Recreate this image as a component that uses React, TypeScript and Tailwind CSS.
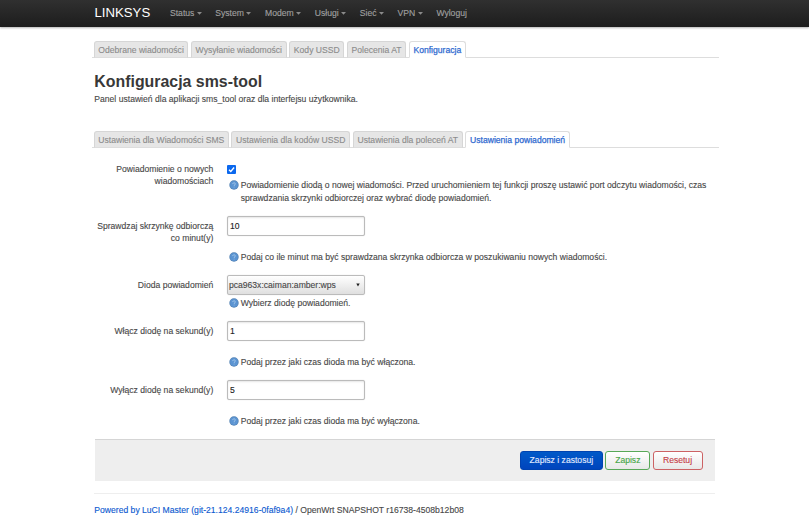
import type { ReactNode } from 'react';

const menu = [
  { label: 'Status', width: 'w-[45.3px]' },
  { label: 'System', width: 'w-[49.7px]' },
  { label: 'Modem', width: 'w-[49.8px]' },
  { label: 'Usługi', width: 'w-[45px]' },
  { label: 'Sieć', width: 'w-[37.8px]' },
  { label: 'VPN', width: 'w-[38.8px]' },
];

const mainTabs = [
  { label: 'Odebrane wiadomości', width: 'w-[94.5px]' },
  { label: 'Wysyłanie wiadomości', width: 'w-[96px]' },
  { label: 'Kody USSD', width: 'w-[55px]' },
  { label: 'Polecenia AT', width: 'w-[59.5px]' },
  { label: 'Konfiguracja', width: 'w-[57px]' },
];

const subTabs = [
  { label: 'Ustawienia dla Wiadomości SMS', width: 'w-[135px]' },
  { label: 'Ustawienia dla kodów USSD', width: 'w-[119px]' },
  { label: 'Ustawienia dla poleceń AT', width: 'w-[110px]' },
  { label: 'Ustawienia powiadomień', width: 'w-[104.5px]' },
];

function Tabs({ items }: { items: { label: string; width: string }[] }) {
  return (
    <ul className="-ml-[2.5px] flex h-[17px] w-[627px] gap-[2.5px] border-b border-[#ddd] pl-[2px]">
      {items.map((t, i) => (
        <li
          key={t.label}
          className={`flex h-[17px] shrink-0 items-center justify-center whitespace-nowrap rounded-t-[3px] border pt-px ${t.width} ${
            i === items.length - 1
              ? 'border-[#ddd] border-b-white bg-white text-[#2f6ad0] [-webkit-text-stroke:0.25px]'
              : 'border-[#d6d6d6] border-b-[#ddd] bg-[#e6e6e6] text-[#8c8c8c]'
          }`}
        >
          {t.label}
        </li>
      ))}
    </ul>
  );
}

function HelpIcon() {
  return (
    <svg viewBox="0 0 10 10" className="mt-[1.2px] h-[10px] w-[10px] shrink-0">
      <circle cx="5" cy="5" r="4.7" fill="#5583b4" />
      <circle cx="5" cy="5" r="3.9" fill="#5b94d2" />
      <path d="M3.7 4.1C3.7 2.4 6.4 2.4 6.3 4C6.2 4.9 5.1 4.9 5.1 5.9M5.1 6.7V7.4" fill="none" stroke="#b3d0ee" strokeWidth=".8" />
    </svg>
  );
}

function Help({ children, className }: { children: ReactNode; className: string }) {
  return (
    <div className={`flex gap-[2px] whitespace-nowrap pl-[1.8px] leading-[12.5px] ${className}`}>
      <HelpIcon />
      <p>{children}</p>
    </div>
  );
}

function Row({ label, height, top = 'pt-[4px]', children }: { label: ReactNode; height: string; top?: string; children: ReactNode }) {
  return (
    <div className={`flex ${height}`}>
      <div className={`w-[119px] shrink-0 whitespace-nowrap text-right leading-[12px] ${top}`}>{label}</div>
      <div className="ml-[13.6px]">{children}</div>
    </div>
  );
}

function TextInput({ value }: { value: string }) {
  return (
    <input
      defaultValue={value}
      className="block h-[20px] w-[138.5px] rounded-[2px] border border-[#bbb] bg-white px-[2px] text-[8.6px] text-[#222] shadow-[inset_0_1px_2px_rgba(0,0,0,0.1),0_0_1px_rgba(0,0,0,0.2)] outline-none"
    />
  );
}

export default function App() {
  return (
    <div className="h-[523px] w-[809px] overflow-hidden bg-white font-['Liberation_Sans',Arial,sans-serif] text-[8.6px] leading-[12px] text-[#484848] [-webkit-text-stroke:0.12px]">
      <header className="flex h-[26.5px] items-center bg-linear-to-b from-[#303030] to-[#1d1d1d] pl-[94.5px] shadow-[0_1px_2px_rgba(0,0,0,0.3)]">
        <a className="w-[75.5px] pb-px text-[13.2px] leading-[16px] text-white [-webkit-text-stroke:0px]">LINKSYS</a>
        <nav className="flex text-[#a0a0a0]">
          {menu.map((m) => (
            <a key={m.label} className={`flex items-center gap-[2.4px] ${m.width}`}>
              {m.label}
              <svg viewBox="0 0 5 3" className="h-[3px] w-[5px]">
                <path d="M0 0H5L2.5 2.7Z" fill="#8a8a8a" />
              </svg>
            </a>
          ))}
          <a>Wyloguj</a>
        </nav>
      </header>
      <main className="ml-[94.3px] w-[621px] pt-[14.5px]">
        <Tabs items={mainTabs} />
        <h2 className="mt-[12px] text-[15.9px] font-bold leading-[24px] text-[#383838] [-webkit-text-stroke:0px]">Konfiguracja sms-tool</h2>
        <p className="-mt-px">Panel ustawień dla aplikacji sms_tool oraz dla interfejsu użytkownika.</p>
        <div className="mt-[26px]">
          <Tabs items={subTabs} />
        </div>
        <form className="pt-[14px]">
          <Row height="h-[54px]" top="pt-px" label={<>Powiadomienie o nowych<br />wiadomościach</>}>
            <div className="mt-[3px] flex h-[9px] w-[9px] items-center justify-center rounded-[1px] bg-[#0b68ee]">
              <svg viewBox="0 0 9 9" className="h-[9px] w-[9px]">
                <path d="M2 4.7L3.8 6.5L7.1 2.5" fill="none" stroke="white" strokeWidth="1.3" />
              </svg>
            </div>
            <Help className="mt-[5px]">
              Powiadomienie diodą o nowej wiadomości. Przed uruchomieniem tej funkcji proszę ustawić port odczytu wiadomości, czas
              <br />
              sprawdzania skrzynki odbiorczej oraz wybrać diodę powiadomień.
            </Help>
          </Row>
          <Row height="h-[59px]" label={<>Sprawdzaj skrzynkę odbiorczą<br />co minut(y)</>}>
            <TextInput value="10" />
            <Help className="mt-[15px]">Podaj co ile minut ma być sprawdzana skrzynka odbiorcza w poszukiwaniu nowych wiadomości.</Help>
          </Row>
          <Row height="h-[46px]" label="Dioda powiadomień">
            <div className="flex h-[20px] w-[138.5px] items-center justify-between rounded-[2px] border border-[#bbb] bg-linear-to-b from-white to-[#dfdfdf] pl-[1px] pr-[4px] shadow-[0_0_1px_rgba(0,0,0,0.2)]">
              <span>pca963x:caiman:amber:wps</span>
              <svg viewBox="0 0 4 4" className="h-[4px] w-[4px]">
                <path d="M.3 .4H3.7L2 3.6Z" fill="#222" />
              </svg>
            </div>
            <Help className="mt-[2px]">Wybierz diodę powiadomień.</Help>
          </Row>
          <Row height="h-[59px]" label="Włącz diodę na sekund(y)">
            <TextInput value="1" />
            <Help className="mt-[15px]">Podaj przez jaki czas dioda ma być włączona.</Help>
          </Row>
          <Row height="h-[58.5px]" label="Wyłącz diodę na sekund(y)">
            <TextInput value="5" />
            <Help className="mt-[15px]">Podaj przez jaki czas dioda ma być wyłączona.</Help>
          </Row>
          <div className="ml-[0.4px] flex h-[42.5px] justify-end gap-[2.2px] border-t border-[#d5d5d5] bg-[#eee] pr-[12.8px] pt-[11px]">
            <button type="button" className="h-[19.5px] w-[83.5px] rounded-[3px] border border-[#0043b0] bg-linear-to-b from-[#0059c8] to-[#0044bd] text-[#e0eaff]">Zapisz i zastosuj</button>
            <button type="button" className="h-[19.5px] w-[45px] rounded-[3px] border border-[#58a858] bg-linear-to-b from-white to-[#e8e8e8] text-[#46a546]">Zapisz</button>
            <button type="button" className="h-[19.5px] w-[50px] rounded-[3px] border border-[#cc6264] bg-linear-to-b from-white to-[#e8e8e8] text-[#c43c45]">Resetuj</button>
          </div>
        </form>
        <footer className="mt-[11.5px] border-t border-[#eee] pt-[10.5px]">
          <a className="text-[#0b59d0]">Powered by LuCI Master (git-21.124.24916-0faf9a4)</a> / OpenWrt SNAPSHOT r16738-4508b12b08
        </footer>
      </main>
    </div>
  );
}
